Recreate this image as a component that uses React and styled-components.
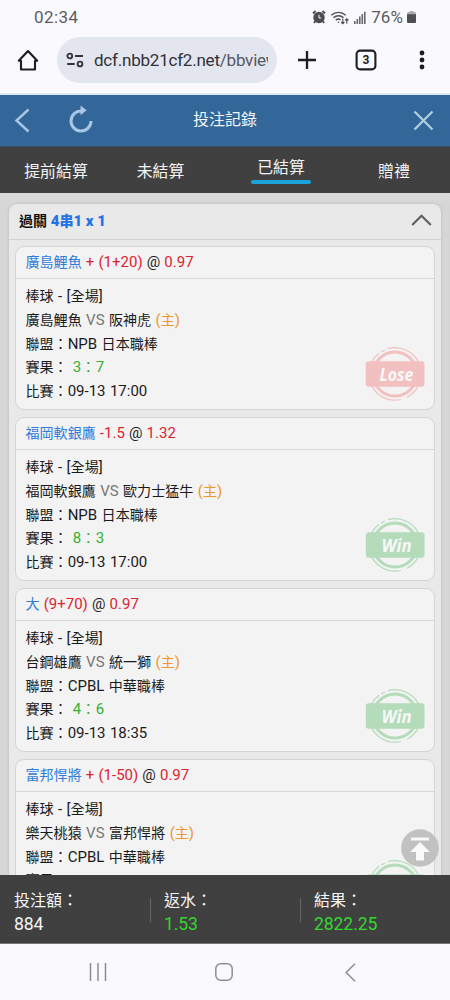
import React from "react";
import styled, { createGlobalStyle } from "styled-components";

const GlobalStyle = createGlobalStyle`
  * { box-sizing: border-box; }
  body { margin: 0; background: #fafafe; font-family: Roboto, "Noto Sans CJK TC", sans-serif; }
`;

const Screen = styled.div`
  width: 450px;
  height: 1000px;
  display: flex;
  flex-direction: column;
  overflow: hidden;
  background: #fafafe;
`;

const StatusBar = styled.header`
  height: 32px;
  flex: none;
  display: flex;
  align-items: center;
  justify-content: space-between;
  padding: 2px 34px 0 34px;
  color: #5c5c60;
`;

const Clock = styled.span`
  font: 400 17px/20px Roboto, sans-serif;
  letter-spacing: 0.4px;
`;

const StatusIcons = styled.div`
  display: flex;
  align-items: center;
  gap: 4px;
`;

const Battery = styled.span`
  font: 400 17px/20px Roboto, sans-serif;
  letter-spacing: 0.1px;
  margin-left: 1px;
`;

const BrowserBar = styled.div`
  height: 63px;
  flex: none;
  display: flex;
  align-items: center;
  padding: 0 13px 5px 13px;
  border-bottom: 2px solid #d7eafa;
  color: #1d1d22;
`;

const IconSlot = styled.div`
  width: ${(p) => p.$w}px;
  display: flex;
  justify-content: center;
`;

const AddressField = styled.div`
  width: 220px;
  height: 46px;
  margin-left: 14px;
  margin-right: 15px;
  border-radius: 23px;
  background: #e4e6ef;
  display: flex;
  align-items: center;
  padding: 0 8px 0 9px;
  gap: 10px;
`;

const Url = styled.div`
  width: 174px;
  overflow: hidden;
  white-space: nowrap;
  font: 400 17px/24px Roboto, sans-serif;
  letter-spacing: -0.22px;
  color: #303137;
  span { color: #55575f; }
`;

const TitleBar = styled.div`
  height: 52px;
  flex: none;
  display: grid;
  grid-template-columns: 150px 150px 150px;
  align-items: center;
  padding-bottom: 1px;
  background: #336699;
  border-bottom: 1px solid #3b5166;
`;

const TitleActions = styled.div`
  display: flex;
  align-items: center;
  justify-content: ${(p) => (p.$end ? "flex-end" : "flex-start")};
  gap: 37px;
  padding: ${(p) => (p.$end ? "0 16px 0 0" : "0 0 0 14px")};
`;

const ReloadIcon = styled.svg`
  margin-bottom: 3px;
`;

const Title = styled.h1`
  margin: 0;
  text-align: center;
  font-size: 16px;
  line-height: 24px;
  font-weight: 400;
  color: #f2f6fa;
`;

const Tabs = styled.nav`
  height: 46px;
  flex: none;
  display: grid;
  grid-template-columns: 112px 97px 144px 82px;
  justify-items: center;
  background: #404040;
`;

const Tab = styled.div`
  margin-top: ${(p) => (p.$active ? 8 : 12)}px;
  width: ${(p) => (p.$active ? "60px" : "auto")};
  height: 29px;
  text-align: center;
  font-size: 15.9px;
  line-height: 26px;
  color: #f4f4f4;
  &::after {
    content: "";
    display: block;
    height: 3.5px;
    margin-top: -1px;
    border-radius: 2px;
    background: ${(p) => (p.$active ? "#1aa3db" : "transparent")};
  }
`;

const Content = styled.main`
  height: 682px;
  flex: none;
  overflow: hidden;
  background: linear-gradient(#d8d8d8 0 1px, #dadada 2px 3px, #d6d6d6 10px);
  padding: 11px 9px 0 9px;
`;

const Panel = styled.section`
  height: 760px;
  background: #e9e9e9;
  border-radius: 8px;
  box-shadow: 0 0 3px rgba(0, 0, 0, 0.14);
`;

const PanelHeader = styled.div`
  height: 36px;
  display: flex;
  align-items: center;
  justify-content: space-between;
  padding: 0 9px 3px 10px;
  border-bottom: 1px solid #d3d3d3;
  font-size: 14px;
  font-weight: 700;
  color: #111;
  b { color: #2472e8; }
`;

const BetList = styled.div`
  display: flex;
  flex-direction: column;
  gap: 7px;
  padding: 6px 6px 0 6px;
`;

const Card = styled.article`
  height: 164px;
  flex: none;
  position: relative;
  border: 1px solid #d4d4d4;
  border-radius: 9px;
  background: #f3f3f3;
`;

const CardTitle = styled.div`
  height: 32px;
  padding: 0 9.5px;
  border-bottom: 1px solid #d8d8d8;
  font-size: 14.05px;
  line-height: 30px;
  word-spacing: 0.4px;
  white-space: pre;
  color: #222;
`;

const CardBody = styled.div`
  padding: 6px 9.5px;
`;

const Line = styled.div`
  height: 23.75px;
  font-size: 14.05px;
  line-height: 23.75px;
  word-spacing: 0.7px;
  white-space: pre;
  color: #1a1a1a;
`;

const Ink = styled.span`
  color: ${(p) => p.$c};
`;

const Score = styled.span`
  margin-left: 0.6px;
  letter-spacing: 0.25px;
  color: #35b02f;
`;

const Latin = styled.span`
  font-size: 15px;
  line-height: 1;
`;

const Stamp = styled.svg`
  position: absolute;
  right: 9px;
  bottom: 8.5px;
`;

const Summary = styled.footer`
  height: 69px;
  flex: none;
  display: grid;
  grid-template-columns: 150px 150px 150px;
  align-items: start;
  padding-top: 14px;
  background: #404040;
  border-bottom: 1px solid #777;
`;

const Total = styled.div`
  display: flex;
  align-items: center;
  &::before {
    content: "";
    width: 1px;
    height: 24px;
    margin: 0 13px 5px 0;
    background: ${(p) => (p.$first ? "transparent" : "#666")};
  }
`;

const TotalLabel = styled.div`
  font-size: 16px;
  line-height: 24px;
  white-space: nowrap;
  color: #f4f4f4;
`;

const Amount = styled.div`
  font-size: 17.6px;
  line-height: 22px;
  letter-spacing: -0.1px;
  color: ${(p) => (p.$win ? "#33d62f" : "#f4f4f4")};
`;

const SystemNav = styled.div`
  flex: 1;
  display: grid;
  grid-template-columns: repeat(3, 126px);
  justify-content: center;
  justify-items: center;
  align-items: center;
  padding-right: 2px;
`;

const ScrollTop = styled.div`
  position: absolute;
  left: 400.5px;
  top: 828.5px;
  width: 38px;
  height: 38px;
  svg { display: block; }
`;

const bets = [
  { pick: "廣島鯉魚", odd: "+ (1+20)", price: "0.97", a: "廣島鯉魚", b: "阪神虎", league: "NPB 日本職棒", score: "3：7", time: "09-13 17:00", win: false },
  { pick: "福岡軟銀鷹", odd: "-1.5", price: "1.32", a: "福岡軟銀鷹", b: "歐力士猛牛", league: "NPB 日本職棒", score: "8：3", time: "09-13 17:00", win: true },
  { pick: "大", odd: "(9+70)", price: "0.97", a: "台鋼雄鷹", b: "統一獅", league: "CPBL 中華職棒", score: "4：6", time: "09-13 18:35", win: true },
  { pick: "富邦悍將", odd: "+ (1-50)", price: "0.97", a: "樂天桃猿", b: "富邦悍將", league: "CPBL 中華職棒", score: "", time: "", win: true },
];

// Wraps the runs of Latin letters, digits and spaces, which are set slightly larger.
function Mixed({ children }) {
  return children
    .split(/([\x20-\x7e]+)/)
    .filter(Boolean)
    .map((part, i) => (/^[\x20-\x7e]/.test(part) ? <Latin key={i}>{part}</Latin> : part));
}

function ResultStamp({ win }) {
  const c = win ? "#b4dcbb" : "#f3c0c1";
  return (
    <Stamp width="60" height="54" viewBox="0 0 60 54">
      <g fill="none" stroke={c}>
        <circle cx="30" cy="27" r="22" strokeWidth="3" />
        <path d="M23 1.6A26.2 26.2 0 0 1 55 19M5 20A26.2 26.2 0 0 1 14 6.3M16 5l4-2M4.8 34a26.2 26.2 0 0 0 31 18.5M42 50.2A26.2 26.2 0 0 0 55.2 34" strokeWidth="1.2" />
      </g>
      <rect x="0.8" y="14.3" width="58.7" height="25.4" rx="3" fill={c} />
      <text x="31.5" y="34" textAnchor="middle" fontFamily="Open Sans, sans-serif" fontWeight="700" fontStyle="italic" fontSize="17.5" textLength={win ? 30 : 34} lengthAdjust="spacingAndGlyphs" fill="#f8f8f8">
        {win ? "Win" : "Lose"}
      </text>
    </Stamp>
  );
}

function BetCard({ bet }) {
  return (
    <Card>
      <CardTitle>
        <Ink $c="#2f7bdc">{bet.pick}</Ink>
        <Ink $c="#dc2430"><Mixed>{` ${bet.odd}`}</Mixed></Ink>
        <Mixed>{" @ "}</Mixed>
        <Ink $c="#dc2430"><Mixed>{bet.price}</Mixed></Ink>
      </CardTitle>
      <CardBody>
        <Line><Mixed>棒球 - [全場]</Mixed></Line>
        <Line>
          {bet.a}
          <Ink $c="#777"><Mixed>{" VS "}</Mixed></Ink>
          {bet.b}
          <Ink $c="#f0962a"><Mixed>{" (主)"}</Mixed></Ink>
        </Line>
        <Line><Mixed>{`聯盟：${bet.league}`}</Mixed></Line>
        <Line><Mixed>賽果： </Mixed>{bet.score && <Score><Mixed>{bet.score}</Mixed></Score>}</Line>
        {bet.time && <Line><Mixed>{`比賽：${bet.time}`}</Mixed></Line>}
      </CardBody>
      <ResultStamp win={bet.win} />
    </Card>
  );
}

function SummaryItem({ label, value, first, win }) {
  return (
    <Total $first={first}>
      <div>
        <TotalLabel>{label}</TotalLabel>
        <Amount $win={win}>{value}</Amount>
      </div>
    </Total>
  );
}

export default function App() {
  return (
    <Screen>
      <GlobalStyle />
      <StatusBar>
        <Clock>02:34</Clock>
        <StatusIcons>
          <svg width="14" height="14" viewBox="0 0 14 14">
            <circle cx="7" cy="7.5" r="5.7" fill="#4c4c50" />
            <path d="M1 3.5 3.6 1M13 3.5 10.4 1M3.2 11.4 1.8 13M10.8 11.4l1.4 1.6" stroke="#4c4c50" strokeWidth="1.8" />
            <path d="M7 4.8V8h2.2" fill="none" stroke="#fafafe" strokeWidth="1" />
          </svg>
          <svg width="20" height="15" viewBox="0 0 20 15" fill="none" stroke="#4c4c50" strokeWidth="1.4">
            <path d="M1.3 5.2a10.5 10.5 0 0 1 14.4 0M3.5 7.8a7.2 7.2 0 0 1 10 0M5.8 10.2a4 4 0 0 1 4.8-.4" />
            <circle cx="8.5" cy="12.3" r="0.8" fill="#4c4c50" stroke="none" />
            <path d="M12.8 8.5v5M11.2 12l1.6 1.7 1.6-1.7M16.8 13.8V9M15.2 10.5l1.6-1.7 1.6 1.7" strokeWidth="1.1" />
          </svg>
          <svg width="12" height="13" viewBox="0 0 12 13" fill="#68686c">
            <path d="M0 10h1.6v3H0zM2.5 8h1.6v5H2.5zM5 5.5h1.6V13H5zM7.5 3h1.6v10H7.5zM10 .8h1.6V13H10z" />
          </svg>
          <Battery>76%</Battery>
          <svg width="9" height="13" viewBox="0 0 9 13">
            <path d="M2.7 0h3.6v1.5H2.7z" fill="#aaa" />
            <rect y="1" width="9" height="11" rx="1.5" fill="#aaaaad" />
            <path d="M0 3.2h9v7.3A1.5 1.5 0 0 1 7.5 12h-6A1.5 1.5 0 0 1 0 10.5z" fill="#505054" />
          </svg>
        </StatusIcons>
      </StatusBar>
      <BrowserBar>
        <IconSlot $w={30}>
          <svg width="22" height="22" viewBox="0 0 22 22" fill="none" stroke="currentColor" strokeWidth="2.1" strokeLinejoin="round" strokeLinecap="round">
            <path d="M1.8 11.8 11 2l9.2 9.8H18v8.7H4v-8.7z" />
          </svg>
        </IconSlot>
        <AddressField>
          <svg width="18" height="16" viewBox="0 0 18 16" fill="none" stroke="#333439" strokeWidth="1.9">
            <circle cx="3.8" cy="4" r="2.4" />
            <circle cx="14" cy="12" r="2.4" />
            <path d="M9 4h8M1.2 12h7.5" />
          </svg>
          <Url>dcf.nbb21cf2.net<span>/bbview</span></Url>
        </AddressField>
        <IconSlot $w={30}>
          <svg width="20" height="20" viewBox="0 0 20 20" stroke="currentColor" strokeWidth="2.3">
            <path d="M10 1v18M1 10h18" />
          </svg>
        </IconSlot>
        <IconSlot $w={88}>
          <svg width="22" height="22" viewBox="0 0 22 22">
            <rect x="1.6" y="1.6" width="18.8" height="18.8" rx="3.5" fill="none" stroke="currentColor" strokeWidth="2.1" />
            <text x="11" y="15.3" textAnchor="middle" fontFamily="Roboto, sans-serif" fontWeight="700" fontSize="12" fill="currentColor">3</text>
          </svg>
        </IconSlot>
        <IconSlot $w={24}>
          <svg width="6" height="20" viewBox="0 0 6 20" fill="currentColor">
            <circle cx="3" cy="3" r="2.4" />
            <circle cx="3" cy="10" r="2.4" />
            <circle cx="3" cy="17" r="2.4" />
          </svg>
        </IconSlot>
      </BrowserBar>
      <TitleBar>
        <TitleActions>
          <svg width="16" height="25" viewBox="0 0 16 25" fill="none" stroke="#a8c7e4" strokeWidth="2.4">
            <path d="M14.5 1.5 2.5 12.5l12 11" />
          </svg>
          <ReloadIcon width="27" height="28" viewBox="0 0 27 28">
            <path d="M14.5 6A10 10 0 1 0 24 16" fill="none" stroke="#a8c7e4" strokeWidth="3" />
            <path d="m13.5.5 6.2 4.7-6.2 5z" fill="#a8c7e4" />
          </ReloadIcon>
        </TitleActions>
        <Title>投注記錄</Title>
        <TitleActions $end>
          <svg width="21" height="21" viewBox="0 0 21 21" stroke="#b3cfe0" strokeWidth="2.2">
            <path d="m1.5 1.5 18 18M19.5 1.5l-18 18" />
          </svg>
        </TitleActions>
      </TitleBar>
      <Tabs>
        <Tab>提前結算</Tab>
        <Tab>未結算</Tab>
        <Tab $active>已結算</Tab>
        <Tab>贈禮</Tab>
      </Tabs>
      <Content>
        <Panel>
          <PanelHeader>
            <span>過關<b><Mixed> 4串1 x 1</Mixed></b></span>
            <svg width="21" height="12" viewBox="0 0 21 12" fill="none" stroke="#606060" strokeWidth="2.2">
              <path d="m1.2 11 9.3-9.3 9.3 9.3" />
            </svg>
          </PanelHeader>
          <BetList>
            {bets.map((bet) => <BetCard key={bet.pick} bet={bet} />)}
          </BetList>
        </Panel>
      </Content>
      <Summary>
        <SummaryItem label="投注額：" value="884" first />
        <SummaryItem label="返水：" value="1.53" win />
        <SummaryItem label="結果：" value="2822.25" win />
      </Summary>
      <SystemNav>
        <svg width="18" height="18" viewBox="0 0 18 18" stroke="#8d8d91" strokeWidth="1.5">
          <path d="M1.5 0v18M9 0v18M16.5 0v18" />
        </svg>
        <svg width="18" height="18" viewBox="0 0 18 18" fill="none" stroke="#8d8d91" strokeWidth="1.5">
          <rect x="0.8" y="0.8" width="16.4" height="16.4" rx="5" />
        </svg>
        <svg width="11" height="19" viewBox="0 0 11 19" fill="none" stroke="#8d8d91" strokeWidth="1.5">
          <path d="M10 .8 1.2 9.5l8.8 8.7" />
        </svg>
      </SystemNav>
      <ScrollTop>
        <svg width="38" height="38" viewBox="0 0 38 38">
          <circle cx="19" cy="19" r="18.8" fill="#bdbdbd" fillOpacity="0.92" />
          <path d="M10 8.5h18v3H10zM19 13l10 10h-6v8.5h-8V23H9z" fill="#fafafa" />
        </svg>
      </ScrollTop>
    </Screen>
  );
}
